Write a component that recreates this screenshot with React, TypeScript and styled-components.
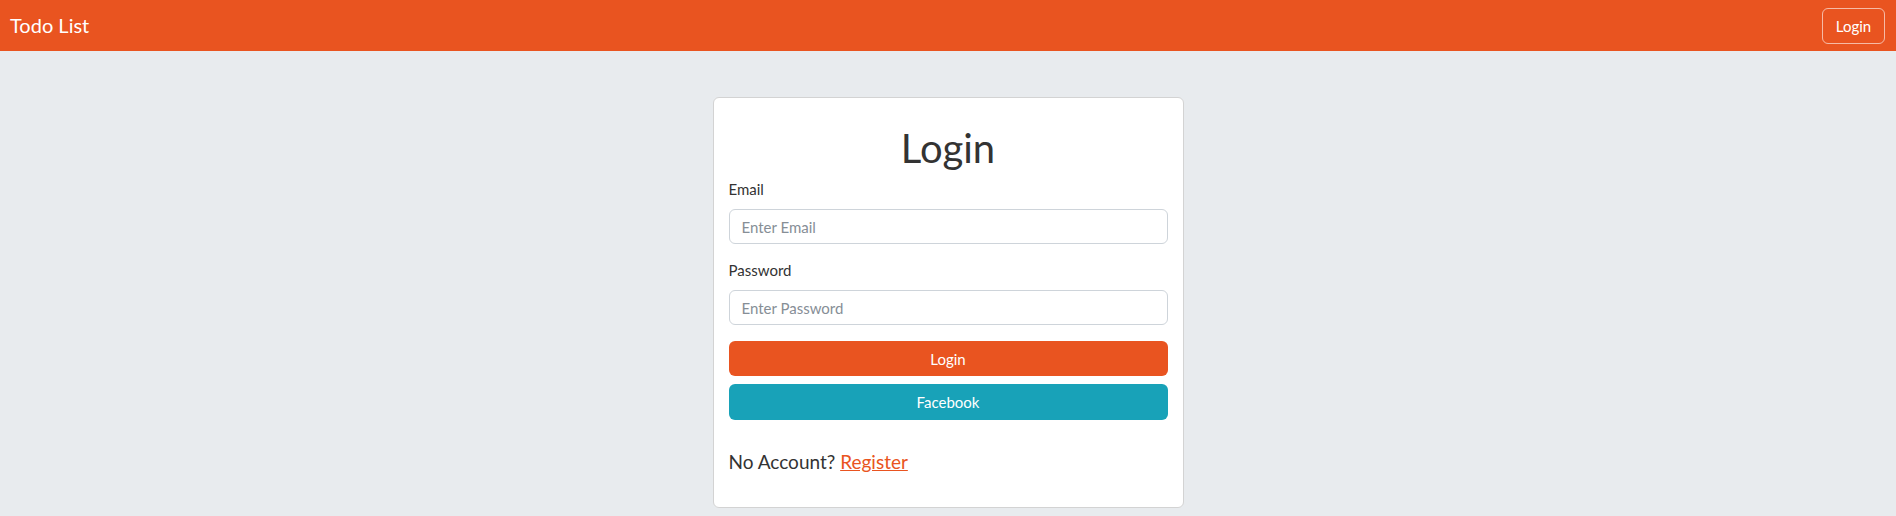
import styled, { createGlobalStyle } from "styled-components";

const GlobalStyle = createGlobalStyle`
  html, body {
    margin: 0;
    padding: 0;
  }
  body {
    background: #e8ebee;
    font-family: Lato, "Liberation Sans", sans-serif;
    color: #333;
  }
  * {
    box-sizing: border-box;
  }
`;

const Navbar = styled.nav`
  display: flex;
  align-items: center;
  justify-content: space-between;
  height: 51px;
  padding: 0 11px 0 10px;
  background: #e95420;
`;

const Brand = styled.a`
  color: #fff;
  font-size: 20px;
  line-height: 24px;
  text-decoration: none;
  padding-bottom: 2px;
`;

const NavButton = styled.button`
  width: 63px;
  height: 36px;
  padding: 0;
  border: 1px solid rgba(255, 255, 255, 0.6);
  border-radius: 6px;
  background: transparent;
  color: #fff;
  font-family: inherit;
  font-size: 15px;
  cursor: pointer;
`;

const Page = styled.main`
  display: flex;
  justify-content: center;
  padding-top: 46px;
`;

const Card = styled.section`
  width: 471px;
  height: 411px;
  padding: 26px 15px 0;
  background: #fff;
  border: 1px solid #d3d3d3;
  border-radius: 6px;
`;

const Title = styled.h1`
  margin: 0 0 5px;
  text-align: center;
  font-size: 40px;
  line-height: 48px;
  font-weight: 400;
  color: #333;
`;

const Field = styled.div<{ gap: number }>`
  display: flex;
  flex-direction: column;
  margin-bottom: ${(p) => p.gap}px;
`;

const Label = styled.label`
  font-size: 15px;
  line-height: 24px;
  margin-bottom: 8px;
`;

const Input = styled.input`
  height: 35px;
  padding: 0 12px;
  border: 1px solid #ced4da;
  border-radius: 6px;
  font-family: inherit;
  font-size: 15px;
  color: #333;
  &::placeholder {
    color: #868e96;
  }
`;

const SubmitButton = styled.button<{ variant: "primary" | "info" }>`
  display: block;
  width: 100%;
  height: ${(p) => (p.variant === "info" ? 36 : 35)}px;
  margin-bottom: ${(p) => (p.variant === "info" ? 27 : 8)}px;
  border: none;
  border-radius: 6px;
  background: ${(p) => (p.variant === "info" ? "#18a2b8" : "#e95420")};
  color: #fff;
  font-family: inherit;
  font-size: 15px;
  cursor: pointer;
`;

const Footer = styled.p`
  margin: 0;
  font-size: 19px;
  line-height: 30px;
`;

const RegisterLink = styled.a`
  color: #e95420;
  text-decoration: underline;
`;

export default function App() {
  return (
    <>
      <GlobalStyle />
      <Navbar>
        <Brand href="#">Todo List</Brand>
        <NavButton>Login</NavButton>
      </Navbar>
      <Page>
        <Card>
          <Title>Login</Title>
          <Field gap={14}>
            <Label>Email</Label>
            <Input type="email" placeholder="Enter Email" />
          </Field>
          <Field gap={16}>
            <Label>Password</Label>
            <Input type="password" placeholder="Enter Password" />
          </Field>
          <SubmitButton variant="primary">Login</SubmitButton>
          <SubmitButton variant="info">Facebook</SubmitButton>
          <Footer>
            No Account? <RegisterLink href="#">Register</RegisterLink>
          </Footer>
        </Card>
      </Page>
    </>
  );
}
